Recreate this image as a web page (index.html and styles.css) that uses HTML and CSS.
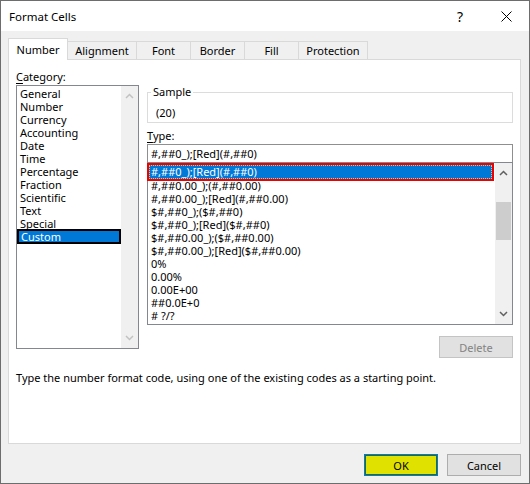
FILE: index.html
```html
<!DOCTYPE html>
<html>
<head>
<meta charset="utf-8">
<title>Format Cells</title>
<link rel="stylesheet" href="styles.css">
</head>
<body>
<div class="window">
  <div class="titlebar">
    <span class="title">Format Cells</span>
    <span class="tb-btn help">?</span>
    <span class="tb-btn close">
      <svg width="11" height="11" viewBox="0 0 11 11"><path d="M0.5 0.5 L10.5 10.5 M10.5 0.5 L0.5 10.5" stroke="#000" stroke-width="1" fill="none"/></svg>
    </span>
  </div>
  <div class="body">
    <div class="tabs">
      <div class="tab tab-active tab-number">Number</div>
      <div class="tab tab-wide">Alignment</div>
      <div class="tab">Font</div>
      <div class="tab">Border</div>
      <div class="tab">Fill</div>
      <div class="tab tab-wide">Protection</div>
    </div>
    <div class="panel">
      <div class="columns">
        <div class="col-left">
          <div class="label"><u>C</u>ategory:</div>
          <div class="listbox cat-list">
            <div class="items cat-items">
              <div class="item">General</div>
              <div class="item">Number</div>
              <div class="item">Currency</div>
              <div class="item">Accounting</div>
              <div class="item">Date</div>
              <div class="item">Time</div>
              <div class="item">Percentage</div>
              <div class="item">Fraction</div>
              <div class="item">Scientific</div>
              <div class="item">Text</div>
              <div class="item">Special</div>
              <div class="item cat-selected">Custom</div>
            </div>
            <div class="scrollbar">
              <div class="sb-btn"><svg width="9" height="6" viewBox="0 0 9 6"><path d="M1 5 L4.5 1.5 L8 5" stroke="#c2c2c2" stroke-width="1.5" fill="none"/></svg></div>
              <div class="sb-track"></div>
              <div class="sb-btn"><svg width="9" height="6" viewBox="0 0 9 6"><path d="M1 1 L4.5 4.5 L8 1" stroke="#c2c2c2" stroke-width="1.5" fill="none"/></svg></div>
            </div>
          </div>
        </div>
        <div class="col-right">
          <fieldset class="sample">
            <legend>Sample</legend>
            <div class="sample-value">(20)</div>
          </fieldset>
          <div class="label type-label"><u>T</u>ype:</div>
          <div class="type-input">#,##0_);[Red](#,##0)</div>
          <div class="listbox type-list">
            <div class="items type-items">
              <div class="type-selected"><span class="focus">#,##0_);[Red](#,##0)</span></div>
              <div class="item">#,##0.00_);(#,##0.00)</div>
              <div class="item">#,##0.00_);[Red](#,##0.00)</div>
              <div class="item">$#,##0_);($#,##0)</div>
              <div class="item">$#,##0_);[Red]($#,##0)</div>
              <div class="item">$#,##0.00_);($#,##0.00)</div>
              <div class="item">$#,##0.00_);[Red]($#,##0.00)</div>
              <div class="item">0%</div>
              <div class="item">0.00%</div>
              <div class="item">0.00E+00</div>
              <div class="item">##0.0E+0</div>
              <div class="item"># ?/?</div>
            </div>
            <div class="scrollbar">
              <div class="sb-btn"><svg width="9" height="6" viewBox="0 0 9 6"><path d="M1 5 L4.5 1.5 L8 5" stroke="#606060" stroke-width="1.5" fill="none"/></svg></div>
              <div class="sb-track"><div class="sb-thumb"></div></div>
              <div class="sb-btn"><svg width="9" height="6" viewBox="0 0 9 6"><path d="M1 1 L4.5 4.5 L8 1" stroke="#606060" stroke-width="1.5" fill="none"/></svg></div>
            </div>
          </div>
          <div class="delete-row"><button class="btn btn-disabled">Delete</button></div>
        </div>
      </div>
      <p class="desc">Type the number format code, using one of the existing codes as a starting point.</p>
    </div>
    <div class="footer">
      <button class="btn btn-ok">OK</button>
      <button class="btn">Cancel</button>
    </div>
  </div>
</div>
</body>
</html>
```

FILE: styles.css
```css
* { box-sizing: border-box; }
html, body { margin: 0; padding: 0; background: #f0f0f0; }
body {
  font-family: "Noto Sans", "DejaVu Sans", sans-serif;
  font-size: 11px;
  color: #000;
}
.window {
  width: 530px;
  height: 484px;
  border: 1px solid #6d6d6d;
  background: #f0f0f0;
  display: flex;
  flex-direction: column;
}
.titlebar {
  height: 30px;
  background: #fff;
  display: flex;
  align-items: center;
  flex: none;
}
.title { padding-left: 8px; flex: 1; font-size: 11.5px; }
.tb-btn {
  width: 46px;
  height: 30px;
  display: flex;
  align-items: center;
  justify-content: center;
}
.help { font-size: 14px; }
.body {
  padding: 7px 0 0 7px;
  display: flex;
  flex-direction: column;
  flex: 1;
}
.tabs {
  display: flex;
  align-items: flex-end;
  height: 21px;
}
.tab {
  width: 55px;
  height: 18px;
  border: 1px solid #d9d9d9;
  border-bottom: none;
  margin-right: -1px;
  background: #f0f0f0;
  text-align: center;
  line-height: 18px;
}
.tab-wide { width: 70px; }
.tab-number { width: 60px; }
.tab-active {
  height: 22px;
  margin-bottom: -1px;
  background: #fff;
  position: relative;
  z-index: 1;
  line-height: 22px;
}
.panel {
  width: 513px;
  height: 385px;
  background: #fff;
  border: 1px solid #d9d9d9;
  padding: 9px 7px 0 7px;
  flex: none;
}
.columns {
  display: flex;
  gap: 8px;
  align-items: flex-start;
}
.col-left { width: 123px; flex: none; }
.col-right { width: 366px; flex: none; }
.label { height: 16px; line-height: 15px; }
.label u { text-decoration: underline; text-underline-offset: 2px; }
.listbox {
  border: 1px solid #828790;
  display: flex;
  background: #fff;
}
.items { flex: 1; min-width: 0; }
.item { line-height: 13px; height: 13px; white-space: nowrap; }
.cat-list { height: 264px; }
.cat-items { padding-top: 1px; }
.cat-items .item { padding-left: 3px; }
.cat-items .cat-selected {
  margin: -1px 0;
  height: 15px;
  border: 2px solid #000;
  background: #0078d7;
  color: #fff;
  line-height: 11px;
  padding-left: 2px;
}
.scrollbar {
  width: 17px;
  flex: none;
  background: #f0f0f0;
  display: flex;
  flex-direction: column;
}
.sb-btn {
  height: 20px;
  display: flex;
  align-items: center;
  justify-content: center;
}
.sb-track { flex: 1; }
.sb-thumb {
  margin: 19px 1px 0 1px;
  height: 38px;
  background: #cdcdcd;
}
.sample {
  margin: 16px 0 0 0;
  padding: 0 0 2px 3px;
  border: 1px solid #dcdcdc;
  min-width: 0;
}
.sample legend {
  padding: 0 2px;
  line-height: 14px;
  font-size: 11px;
}
.sample-value { margin-top: 7px; line-height: 14px; padding-left: 5px; }
.type-label { margin-top: 6px; height: 15px; line-height: 14px; }
.type-input {
  height: 19px;
  border: 1px solid #8f8f8f;
  padding-left: 3px;
  line-height: 17px;
  background: #fff;
}
.type-list {
  margin-top: -1px;
  height: 163px;
}
.type-items .item { padding-left: 3px; }
.type-selected {
  position: relative;
  z-index: 1;
  height: 18px;
  margin: 0 1px -2px -1px;
  border: 2px solid #ee0000;
  background: #0078d7;
  color: #fff;
}
.type-selected .focus {
  display: block;
  height: 14px;
  border: 1px dotted #f2b86a;
  line-height: 12px;
  padding-left: 1px;
  white-space: nowrap;
}
.delete-row {
  margin-top: 11px;
  display: flex;
  justify-content: flex-end;
}
.btn {
  font-family: inherit;
  font-size: 11px;
  width: 74px;
  height: 22px;
  border: 1px solid #adadad;
  background: #e1e1e1;
  color: #000;
  padding: 0;
  margin: 0;
}
.btn-disabled {
  color: #838383;
  border-color: #c4c4c4;
  background: #e1e1e1;
}
.desc {
  margin: 12px 0 0 0;
  line-height: 15px;
}
.footer {
  margin-top: 10px;
  padding-right: 8px;
  display: flex;
  justify-content: flex-end;
  gap: 9px;
}
.btn-ok {
  background: #e1e100;
  border: 1px solid #0078d7;
  box-shadow: inset 0 0 0 1px #2f6a20;
}
```
